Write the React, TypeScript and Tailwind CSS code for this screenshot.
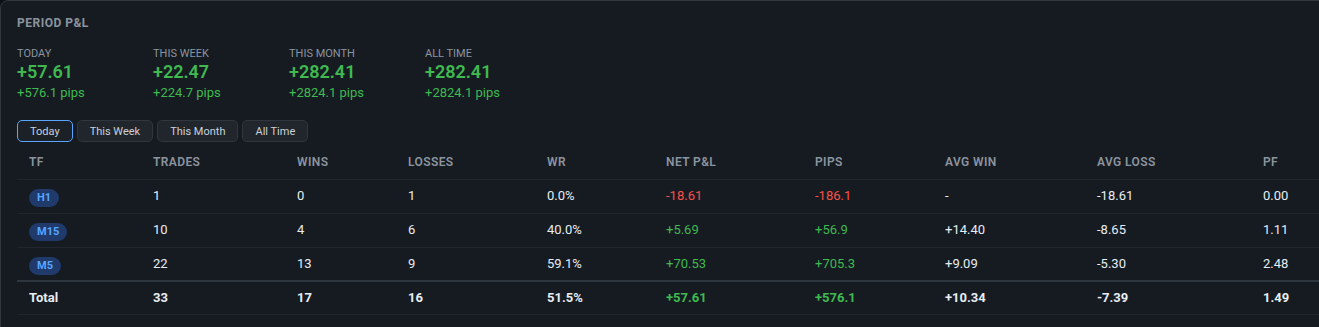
import React from "react";

const stats = [
  { label: "TODAY", value: "+57.61", pips: "+576.1 pips" },
  { label: "THIS WEEK", value: "+22.47", pips: "+224.7 pips" },
  { label: "THIS MONTH", value: "+282.41", pips: "+2824.1 pips" },
  { label: "ALL TIME", value: "+282.41", pips: "+2824.1 pips" },
];

const buttons = ["Today", "This Week", "This Month", "All Time"];

const headers = ["TF", "TRADES", "WINS", "LOSSES", "WR", "NET P&L", "PIPS", "AVG WIN", "AVG LOSS", "PF"];
const widths = ["w-[124px]", "w-[144px]", "w-[111px]", "w-[139px]", "w-[119px]", "w-[149px]", "w-[130px]", "w-[152px]", "w-[166px]", "w-[85px]"];

type Row = { tf: string; cells: string[] };
const rows: Row[] = [
  { tf: "H1", cells: ["1", "0", "1", "0.0%", "-18.61", "-186.1", "-", "-18.61", "0.00"] },
  { tf: "M15", cells: ["10", "4", "6", "40.0%", "+5.69", "+56.9", "+14.40", "-8.65", "1.11"] },
  { tf: "M5", cells: ["22", "13", "9", "59.1%", "+70.53", "+705.3", "+9.09", "-5.30", "2.48"] },
];
const total = ["33", "17", "16", "51.5%", "+57.61", "+576.1", "+10.34", "-7.39", "1.49"];

function cellColor(i: number, v: string) {
  if (i === 4 || i === 5) return v.startsWith("-") ? "text-[#f85149]" : "text-[#3fb950]";
  return "text-[#e6edf3]";
}

export default function App() {
  return (
    <div className="w-[1319px] h-[327px] overflow-hidden bg-[#0d1117]" style={{ fontFamily: "Roboto, 'Liberation Sans', sans-serif" }}>
      <div className="w-[1360px] h-[360px] rounded-lg border border-[#30363d] bg-[#161b22] px-4 pt-[14px]">
        <div className="text-[12px] font-bold tracking-[0.5px] text-[#8b949e] leading-4">PERIOD P&amp;L</div>
        <div className="mt-[16px] flex">
          {stats.map((s) => (
            <div key={s.label} className="w-[136px]">
              <div className="text-[11px] leading-[14px] text-[#8b949e]">{s.label}</div>
              <div className="text-[18px] leading-[21px] font-semibold text-[#3fb950]">{s.value}</div>
              <div className="mt-[3px] text-[13px] leading-[16px] text-[#3fb950]">{s.pips}</div>
            </div>
          ))}
        </div>
        <div className="mt-[19px] flex gap-1">
          {buttons.map((b, i) => (
            <button
              key={b}
              className={
                "h-[22px] px-[12px] rounded-[5px] border text-[11px] leading-none text-[#c9d1d9] " +
                (i === 0 ? "border-[#58a6ff] bg-[#1c2128]" : "border-[#30363d] bg-[#21262d]")
              }
            >
              {b}
            </button>
          ))}
        </div>
        <table className="mt-[3px] border-collapse text-left">
          <thead>
            <tr className="border-b border-[#21262d]">
              {headers.map((h, i) => (
                <th key={h} className={"h-[34px] px-3 text-[12px] font-semibold tracking-[0.4px] text-[#8b949e] " + widths[i]}>{h}</th>
              ))}
            </tr>
          </thead>
          <tbody>
            {rows.map((r, ri) => (
              <tr key={r.tf} className={ri === rows.length - 1 ? "border-b-2 border-[#30363d]" : "border-b border-[#21262d]"}>
                <td className="h-[34px] px-3">
                  <span className="inline-flex h-[18px] items-center rounded-full bg-[#1f3a6b] px-2 text-[11px] font-bold text-[#58a6ff]">{r.tf}</span>
                </td>
                {r.cells.map((c, i) => (
                  <td key={i} className={"h-[34px] px-3 text-[13px] " + cellColor(i, c)}>{c}</td>
                ))}
              </tr>
            ))}
            <tr className="border-b border-[#21262d]">
              <td className="h-[33px] px-3 text-[13px] font-bold text-[#e6edf3]">Total</td>
              {total.map((c, i) => (
                <td key={i} className={"h-[33px] px-3 text-[13px] font-bold " + cellColor(i, c)}>{c}</td>
              ))}
            </tr>
          </tbody>
        </table>
      </div>
    </div>
  );
}
